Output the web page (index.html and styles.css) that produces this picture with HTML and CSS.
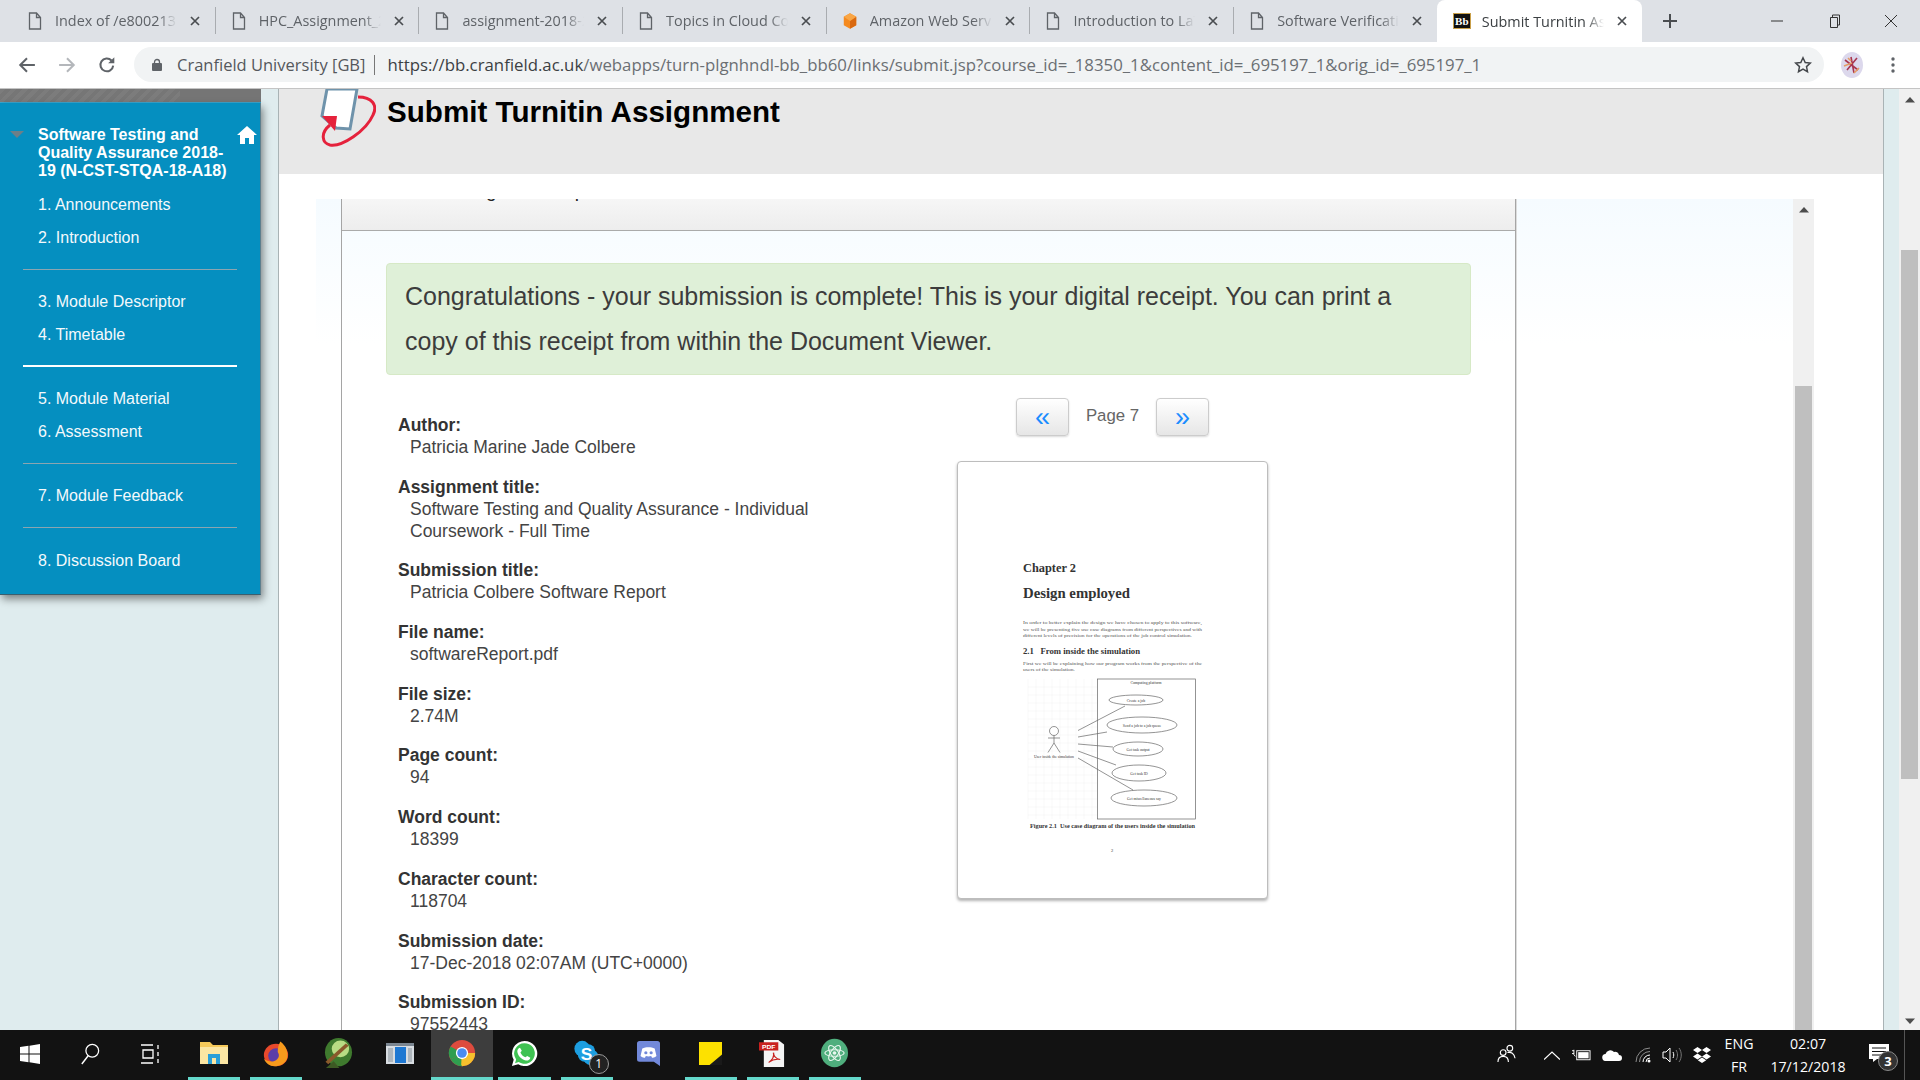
FILE: index.html
```html
<!DOCTYPE html>
<html lang="en">
<head>
    <meta charset="UTF-8">
    <title>Submit Turnitin Assignment</title>
    <link rel="stylesheet" href="styles.css">
</head>
<body>
    <svg class="defs" width="0" height="0">
        <symbol id="doc" viewBox="0 0 14 18"><path d="M1.500 1h7l4 4.500V17h-11zM8.500 1v4.500h4" fill="none" stroke="#5f6368" stroke-width="1.300"/></symbol>
        <symbol id="close" viewBox="0 0 10 10"><path d="M1 1l8 8M9 1l-8 8" fill="none" stroke="#4a4d51" stroke-width="1.700"/></symbol>
        <symbol id="up" viewBox="0 0 10 6"><path d="M5 0l5 5.500H0z" fill="#4d4d4d"/></symbol>
    </svg>

    <div class="tabstrip">
        <div class="tab"><svg class="tab-icon"><use href="#doc"/></svg><span class="tab-title">Index of /e800213</span><svg class="tab-close"><use href="#close"/></svg></div>
        <div class="tab"><svg class="tab-icon"><use href="#doc"/></svg><span class="tab-title">HPC_Assignment_2018</span><svg class="tab-close"><use href="#close"/></svg></div>
        <div class="tab"><svg class="tab-icon"><use href="#doc"/></svg><span class="tab-title">assignment-2018-2019</span><svg class="tab-close"><use href="#close"/></svg></div>
        <div class="tab"><svg class="tab-icon"><use href="#doc"/></svg><span class="tab-title">Topics in Cloud Computing</span><svg class="tab-close"><use href="#close"/></svg></div>
        <div class="tab">
            <svg class="tab-icon" viewBox="0 0 18 20"><path d="M9 0l8 4.500v11L9 20l-8-4.500v-11z" fill="#f58a1f"/><path d="M9 10l8-5.500v11L9 20z" fill="#d9680f"/><path d="M9 0l8 4.500L9 10 1 4.500z" fill="#f9a646"/></svg>
            <span class="tab-title">Amazon Web Services</span><svg class="tab-close"><use href="#close"/></svg>
        </div>
        <div class="tab"><svg class="tab-icon"><use href="#doc"/></svg><span class="tab-title">Introduction to LaTeX</span><svg class="tab-close"><use href="#close"/></svg></div>
        <div class="tab"><svg class="tab-icon"><use href="#doc"/></svg><span class="tab-title">Software Verification</span><svg class="tab-close"><use href="#close"/></svg></div>
        <div class="tab tab-active">
            <span class="bb-icon">Bb</span>
            <span class="tab-title">Submit Turnitin Assignment</span><svg class="tab-close"><use href="#close"/></svg>
        </div>
        <svg class="new-tab" viewBox="0 0 14 14"><path d="M7 0v14M0 7h14" stroke="#4a4d51" stroke-width="2"/></svg>
        <div class="window-controls">
            <svg viewBox="0 0 14 14"><path d="M1 7h12" stroke="#333" stroke-width="1"/></svg>
            <svg viewBox="0 0 14 14"><path d="M3.500 3.500h7v10h-7zM5.500 3.500V1h7v10h-2" fill="none" stroke="#333" stroke-width="1"/></svg>
            <svg viewBox="0 0 14 14"><path d="M1 1l12 12M13 1L1 13" stroke="#333" stroke-width="1"/></svg>
        </div>
    </div>

    <div class="toolbar">
        <svg class="nav-icon first" viewBox="0 0 16 16"><path d="M15 8H2M8 2L2 8l6 6" fill="none" stroke="#5f6368" stroke-width="1.800"/></svg>
        <svg class="nav-icon" viewBox="0 0 16 16"><path d="M1 8h13M8 2l6 6-6 6" fill="none" stroke="#b4b7bb" stroke-width="1.800"/></svg>
        <svg class="nav-icon" viewBox="0 0 16 16"><path d="M13.500 8.500A5.700 5.700 0 1 1 12 4" fill="none" stroke="#5f6368" stroke-width="1.800"/><path d="M14.500 1v5.500H9z" fill="#5f6368"/></svg>
        <div class="omnibox">
            <svg class="lock" viewBox="0 0 10 13"><path d="M2.500 5.500V4a2.500 2.500 0 0 1 5 0v1.500" fill="none" stroke="#5f6368" stroke-width="1.300"/><rect y="5" width="10" height="8" rx="1" fill="#5f6368"/></svg>
            <span class="site-name">Cranfield University [GB]</span>
            <span class="url"><b>https://bb.cranfield.ac.uk</b>/webapps/turn-plgnhndl-bb_bb60/links/submit.jsp?course_id=_18350_1&amp;content_id=_695197_1&amp;orig_id=_695197_1</span>
            <svg class="star" viewBox="0 0 18 18"><path d="M9 1.800l2.200 4.700 5.100.6-3.800 3.500 1 5.100L9 13.200l-4.500 2.500 1-5.100L1.700 7.100l5.100-.6z" fill="none" stroke="#45484c" stroke-width="1.500"/></svg>
        </div>
        <svg class="avatar" viewBox="0 0 26 26"><ellipse cx="13" cy="13" rx="11" ry="13" fill="#dcd8ec"/><path d="M6 8l13 10M8 18l10-12M12 5l3 16" stroke="#a8354f" stroke-width="1.600"/><path d="M5 14l8-3M15 21l5-5M9 6l3 3" stroke="#e39a66" stroke-width="1.600"/></svg>
        <svg class="menu-dots" viewBox="0 0 4 16"><circle cx="2" cy="2" r="1.700" fill="#5f6368"/><circle cx="2" cy="8" r="1.700" fill="#5f6368"/><circle cx="2" cy="14" r="1.700" fill="#5f6368"/></svg>
    </div>

    <div class="viewport">
        <aside class="side">
            <div class="hatch"></div>
            <nav class="course-menu">
                <i class="menu-arrow"></i>
                <svg class="home" viewBox="0 0 20 18"><path d="M10 0l10 9h-3v9h-5v-6H8v6H3V9H0z" fill="#fff"/></svg>
                <h2 class="course-title">Software Testing and Quality Assurance 2018-19 (N-CST-STQA-18-A18)</h2>
                <ul class="menu-group">
                    <li>1. Announcements</li>
                    <li>2. Introduction</li>
                </ul>
                <ul class="menu-group">
                    <li>3. Module Descriptor</li>
                    <li>4. Timetable</li>
                </ul>
                <ul class="menu-group">
                    <li>5. Module Material</li>
                    <li>6. Assessment</li>
                </ul>
                <ul class="menu-group">
                    <li>7. Module Feedback</li>
                </ul>
                <ul class="menu-group">
                    <li>8. Discussion Board</li>
                </ul>
            </nav>
        </aside>

        <main class="main">
            <header class="page-head">
                <svg class="tii-logo" viewBox="0 0 56 60">
                    <path d="M38 8C52 8 58 16 53 26 46 42 22 58 10 56 2 54 0 44 10 36" fill="none" stroke="#e5223c" stroke-width="3"/>
                    <path d="M7 0h30l-7 40-14-1L2 27z" fill="#fff" stroke="#6f93ab" stroke-width="3"/>
                    <path d="M2 27h15l-2 15z" fill="#e5223c"/>
                </svg>
                <h1>Submit Turnitin Assignment</h1>
            </header>

            <div class="frame">
                <div class="frame-content">
                    <section class="panel">
                        <div class="panel-head"><span>Digital Receipt</span></div>
                        <div class="alert">Congratulations - your submission is complete! This is your digital receipt. You can print a copy of this receipt from within the Document Viewer.</div>
                        <div class="receipt">
                            <dl class="meta">
                                <dt>Author:</dt>
                                <dd>Patricia Marine Jade Colbere</dd>
                                <dt>Assignment title:</dt>
                                <dd>Software Testing and Quality Assurance - Individual Coursework - Full Time</dd>
                                <dt>Submission title:</dt>
                                <dd>Patricia Colbere Software Report</dd>
                                <dt>File name:</dt>
                                <dd>softwareReport.pdf</dd>
                                <dt>File size:</dt>
                                <dd>2.74M</dd>
                                <dt>Page count:</dt>
                                <dd>94</dd>
                                <dt>Word count:</dt>
                                <dd>18399</dd>
                                <dt>Character count:</dt>
                                <dd>118704</dd>
                                <dt>Submission date:</dt>
                                <dd>17-Dec-2018 02:07AM (UTC+0000)</dd>
                                <dt>Submission ID:</dt>
                                <dd>97552443</dd>
                            </dl>
                            <div class="viewer">
                                <div class="pager">
                                    <button class="page-btn">&laquo;</button>
                                    <span class="page-no">Page 7</span>
                                    <button class="page-btn">&raquo;</button>
                                </div>
                                <div class="sheet">
                                    <svg class="sheet-page" viewBox="0 0 309 436">
                                        <g class="tex">
                                            <text x="65" y="110" font-size="12" font-weight="bold" textLength="53" lengthAdjust="spacingAndGlyphs">Chapter 2</text>
                                            <text x="65" y="135.500" font-size="15" font-weight="bold" textLength="107" lengthAdjust="spacingAndGlyphs">Design employed</text>
                                            <g font-size="5">
                                                <text x="65" y="162" textLength="179" lengthAdjust="spacingAndGlyphs">In order to better explain the design we have chosen to apply to this software,</text>
                                                <text x="65" y="168.500" textLength="179" lengthAdjust="spacingAndGlyphs">we will be presenting five use case diagrams from different perspectives and with</text>
                                                <text x="65" y="175" textLength="169" lengthAdjust="spacingAndGlyphs">different levels of precision for the operations of the job control simulation.</text>
                                                <text x="65" y="203" textLength="179" lengthAdjust="spacingAndGlyphs">First we will be explaining how our program works from the perspective of the</text>
                                                <text x="65" y="209" textLength="52" lengthAdjust="spacingAndGlyphs">users of the simulation.</text>
                                            </g>
                                            <text x="65" y="191.500" font-size="7.500" font-weight="bold" textLength="117" lengthAdjust="spacingAndGlyphs">2.1 &#160; From inside the simulation</text>
                                            <text x="72" y="366" font-size="5.500" font-weight="bold" textLength="165" lengthAdjust="spacingAndGlyphs">Figure 2.1 &#160;Use case diagram of the users inside the simulation</text>
                                            <text x="153" y="390" font-size="4.500">2</text>
                                        </g>
                                        <g stroke="#f1f1f1" stroke-width="0.500">
                                            <path d="M70 217v140M78 217v140M86 217v140M94 217v140M102 217v140M110 217v140M118 217v140M126 217v140M134 217v140"/>
                                            <path d="M70 225h69M70 233h69M70 241h69M70 249h69M70 257h69M70 265h69M70 273h69M70 281h69M70 289h69M70 297h69M70 305h69M70 313h69M70 321h69M70 329h69M70 337h69M70 345h69M70 353h69"/>
                                        </g>
                                        <g fill="#fff" stroke="#666" stroke-width="0.700">
                                            <rect x="139.500" y="217" width="98" height="140"/>
                                            <ellipse cx="178" cy="238" rx="27" ry="5"/>
                                            <ellipse cx="184" cy="263" rx="35" ry="8"/>
                                            <ellipse cx="180" cy="287" rx="25" ry="7"/>
                                            <ellipse cx="181" cy="311" rx="27" ry="8"/>
                                            <ellipse cx="186" cy="336" rx="33" ry="8"/>
                                            <circle cx="96" cy="269" r="4.500"/>
                                            <path d="M96 273.500V281M90 276h12M96 281l-6 9.500M96 281l6 9.500M120 268.500l47-24.500M120 275l29-5M120 282l35 3M120 289l38 14M120 296l55 32" fill="none"/>
                                        </g>
                                        <g font-size="3.800" fill="#333" text-anchor="middle">
                                            <text x="188" y="222">Computing platform</text>
                                            <text x="178" y="239.500">Create a job</text>
                                            <text x="184" y="264.500">Send a job to a job queue</text>
                                            <text x="180" y="288.500">Get task output</text>
                                            <text x="181" y="312.500">Get task ID</text>
                                            <text x="186" y="337.500">Get miscellaneous say</text>
                                            <text x="96" y="296">User inside the simulation</text>
                                        </g>
                                    </svg>
                                </div>
                            </div>
                        </div>
                    </section>
                </div>
                <div class="scrollbar inner-bar">
                    <svg class="arrow"><use href="#up"/></svg>
                    <div class="thumb inner-thumb"></div>
                </div>
            </div>
        </main>

        <div class="gutter"></div>
        <div class="scrollbar page-bar">
            <svg class="arrow"><use href="#up"/></svg>
            <div class="thumb page-thumb"></div>
            <svg class="arrow arrow-down"><use href="#up"/></svg>
        </div>
    </div>

    <footer class="taskbar">
        <div class="sys-btn">
            <svg viewBox="0 0 20 20"><path d="M0 3l8.500-1.200V9.500H0zM9.500 1.700L20 0v9.500H9.500zM0 10.500h8.500v7.700L0 17zM9.500 10.500H20V20L9.500 18.300z" fill="#fff"/></svg>
        </div>
        <div class="sys-btn">
            <svg viewBox="0 0 22 24"><circle cx="13.500" cy="8.500" r="7" fill="none" stroke="#fff" stroke-width="1.400"/><path d="M9 14L2 23" stroke="#fff" stroke-width="1.600"/></svg>
        </div>
        <div class="sys-btn">
            <svg viewBox="0 0 20 20"><path d="M1 1h12M1 19h12M3 6h10v8H3zM18 1v4M18 8v4M18 15v4" fill="none" stroke="#fff" stroke-width="1.300"/></svg>
        </div>

        <div class="pin running">
            <svg width="28" height="22" viewBox="0 0 28 22"><path d="M0 0h10l3 3h15v19H0z" fill="#f5c95a"/><path d="M0 5h28v17H0z" fill="#fbe6a3"/><path d="M8 12h12v10H8z" fill="#2a9fd8"/><rect x="12" y="16" width="4" height="6" fill="#fbe6a3"/></svg>
        </div>
        <div class="pin running">
            <svg width="26" height="27" viewBox="0 0 30 36" preserveAspectRatio="none"><ellipse cx="15" cy="20" rx="14" ry="15" fill="#e8492c"/><ellipse cx="15" cy="21" rx="9" ry="10" fill="#5b3da8"/><path d="M20 2c7 6 9 14 8 22-2 8-9 11-15 11C8 35 3 31 1 25c4 4 10 5 14 2 4-3 4-8 2-11 0-5 1-10 3-14z" fill="#f79a1c"/></svg>
        </div>
        <div class="pin">
            <svg width="29" height="30" viewBox="0 0 30 36" preserveAspectRatio="none"><ellipse cx="15" cy="17" rx="14" ry="17" fill="#3f7a2e"/><ellipse cx="17" cy="13" rx="9" ry="10" fill="#b9dc84"/><path d="M3 30L24 8" stroke="#8a5a2b" stroke-width="4"/><path d="M2 36l8-8 6 8z" fill="#3d5a24"/></svg>
        </div>
        <div class="pin">
            <svg width="28" height="21" viewBox="0 0 28 21"><rect width="28" height="21" fill="#d8dde2"/><rect width="28" height="3" fill="#7b8691"/><rect x="2" y="5" width="5" height="14" fill="#aeb6bd"/><rect x="9" y="4" width="11" height="16" fill="#1e78d2"/><rect x="22" y="5" width="4" height="14" fill="#aeb6bd"/></svg>
        </div>
        <div class="pin running chrome-pin">
            <svg width="28" height="28" viewBox="0 0 32 32"><circle cx="16" cy="16" r="15" fill="#dd4b3e"/><path d="M16 16L3 23.500A15 15 0 0 0 16 31z" fill="#2f9e4f"/><path d="M16 16L3 23.500A15 15 0 0 1 3 8.500z" fill="#2f9e4f"/><path d="M16 16h15A15 15 0 0 1 16 31l-1-2z" fill="#f6c02d"/><circle cx="16" cy="16" r="7" fill="#fff"/><circle cx="16" cy="16" r="5.500" fill="#4a8bf0"/></svg>
        </div>
        <div class="pin running">
            <svg width="27" height="27" viewBox="0 0 30 30"><path d="M15 1a14 14 0 1 1-7 26l-7 2 2-7A14 14 0 0 1 15 1z" fill="#fff"/><path d="M15 3.500a11.500 11.500 0 1 1-6.500 21l-4 1.200 1.200-4A11.500 11.500 0 0 1 15 3.500z" fill="#3fc252"/><path d="M10 8.500l2 3.500-1.500 1.800c1 2.500 3 4.500 5.500 5.500l2-1.600 3.500 2c-.5 2.500-3 3.500-5 3-5-1-9-5.500-9.500-10 0-2 1-3.700 3-4.200z" fill="#fff"/></svg>
        </div>
        <div class="pin running">
            <svg width="27" height="26" viewBox="0 0 30 30"><circle cx="10" cy="10" r="9" fill="#1d9ee0"/><circle cx="20" cy="20" r="9" fill="#1d9ee0"/><rect x="5" y="5" width="20" height="20" rx="8" fill="#1d9ee0"/><text x="15" y="23" text-anchor="middle" font-size="20" font-weight="bold" fill="#fff" font-family="Liberation Sans">S</text></svg>
            <span class="pin-badge">1</span>
        </div>
        <div class="pin">
            <svg width="23" height="25" viewBox="0 0 26 30" preserveAspectRatio="none"><path d="M3 0h20a3 3 0 0 1 3 3v27l-7-5H3a3 3 0 0 1-3-3V3a3 3 0 0 1 3-3z" fill="#7289da"/><path d="M6 9c4-2 10-2 14 0l2 9c-2 2-4 2-5 2l-1-2c-2 .6-4 .6-6 0l-1 2c-1 0-3 0-5-2z" fill="#fff"/><circle cx="10" cy="14" r="1.800" fill="#7289da"/><circle cx="16" cy="14" r="1.800" fill="#7289da"/></svg>
        </div>
        <div class="pin running">
            <svg width="23" height="23" viewBox="0 0 24 24"><rect width="24" height="24" fill="#fde100"/><path d="M24 13v11H11z" fill="#1a1a1a"/></svg>
        </div>
        <div class="pin running">
            <svg width="27" height="27" viewBox="0 0 28 36" preserveAspectRatio="none"><path d="M5 0h15l6 6v30H5z" fill="#f4f4f4"/><rect y="3" width="20" height="11" fill="#c8201e"/><text x="10" y="11.500" text-anchor="middle" font-size="7" font-weight="bold" fill="#fff" font-family="Liberation Sans">PDF</text><path d="M10 30c4-4 6-9 5-13 0 5 3 8 7 9-5-1-8 0-12 4z" fill="none" stroke="#c8201e" stroke-width="1.400"/></svg>
        </div>
        <div class="pin running">
            <svg width="29" height="30" viewBox="0 0 30 36" preserveAspectRatio="none"><ellipse cx="15" cy="18" rx="14" ry="17" fill="#4fae7d"/><g fill="none" stroke="#e8f6ee" stroke-width="1.200"><ellipse cx="15" cy="18" rx="10" ry="4"/><ellipse cx="15" cy="18" rx="10" ry="4" transform="rotate(60 15 18)"/><ellipse cx="15" cy="18" rx="10" ry="4" transform="rotate(120 15 18)"/></g><circle cx="15" cy="18" r="2" fill="#e8f6ee"/></svg>
        </div>

        <div class="tray">
            <svg class="tray-people" viewBox="0 0 20 20"><g fill="none" stroke="#fff" stroke-width="1.200"><circle cx="13.500" cy="4.500" r="3"/><circle cx="6.500" cy="9" r="3"/><path d="M1 19c0-4 2-6 5.500-6s5.500 2 5.500 6M11 9c4-1 7 1 8 6"/></g></svg>
            <svg class="tray-chevron" viewBox="0 0 16 9"><path d="M0 8.500L8 1l8 7.500" fill="none" stroke="#fff" stroke-width="1.200"/></svg>
            <svg class="tray-battery" viewBox="0 0 20 12"><path d="M0 1.500h2M0 4.500h2M2 .5v5l1.500 2" stroke="#fff" fill="none"/><rect x="5" y="1.500" width="14" height="9.500" fill="none" stroke="#fff"/><rect x="6.500" y="3" width="11" height="6.500" fill="#fff"/></svg>
            <svg class="tray-cloud" viewBox="0 0 20 12"><path d="M4 12a3.500 3.500 0 0 1-.5-7A5 5 0 0 1 12 3a3.800 3.800 0 0 1 5 3 3 3 0 0 1 0 6z" fill="#fff"/></svg>
            <svg class="tray-wifi" viewBox="0 0 16 16"><g fill="none" stroke="#8c8c8c" stroke-width="1"><path d="M1 15A14 14 0 0 1 15 1"/><path d="M4.500 15A10.500 10.500 0 0 1 15 4.500"/></g><path d="M8 15a7 7 0 0 1 7-7" fill="none" stroke="#fff" stroke-width="1"/><path d="M11 15a4 4 0 0 1 4-4" fill="none" stroke="#fff" stroke-width="1"/><circle cx="14" cy="14" r="1.500" fill="#fff"/></svg>
            <svg class="tray-volume" viewBox="0 0 20 16"><path d="M1 5h3l4-4v14l-4-4H1z" fill="none" stroke="#fff"/><path d="M11 5c1 2 1 4 0 6" fill="none" stroke="#fff"/><path d="M14 3c2 3 2 7 0 10M17 1c3 4 3 10 0 14" fill="none" stroke="#777"/></svg>
            <svg class="tray-dropbox" viewBox="0 0 18 16"><path d="M4.500 0L9 3 4.500 6 0 3zM13.500 0L18 3l-4.500 3L9 3zM4.500 6.500L9 9.500l-4.500 3L0 9.500zM13.500 6.500l4.500 3-4.500 3L9 9.500zM4.800 13.300L9 10.500l4.200 2.800L9 16z" fill="#fff"/></svg>
            <div class="lang">ENG<br>FR</div>
            <div class="clock">02:07<br>17/12/2018</div>
            <div class="notify">
                <svg viewBox="0 0 20 18"><path d="M0 0h20v15H8l-4 3v-3H0z" fill="#fff"/><path d="M3 4h14M3 7.500h14M3 11h9" stroke="#111" stroke-width="1"/></svg>
                <span class="notify-badge">3</span>
            </div>
            <div class="show-desktop"></div>
        </div>
    </footer>
</body>
</html>
```

FILE: styles.css
```css
* {
    box-sizing: border-box;
}
html, body {
    height: 100%;
}
body {
    margin: 0;
    width: 1920px;
    height: 1080px;
    overflow: hidden;
    display: flex;
    flex-direction: column;
    font-family: "Liberation Sans", Arial, sans-serif;
    background-color: #fff;
}
.defs {
    position: absolute;
}

/* chrome tabs */
.tabstrip {
    height: 42px;
    flex: none;
    display: flex;
    align-items: stretch;
    padding-left: 12px;
    background-color: #dee1e6;
}
.tab {
    width: 203.7px;
    flex: none;
    display: flex;
    align-items: center;
    padding-left: 16px;
    border-right: 1px solid #a9acb0;
    margin: 7px 0 8px;
    font-family: "Open Sans", sans-serif;
    font-size: 14.4px;
    color: #5f6368;
}
.tab-icon {
    width: 14px;
    height: 18px;
    flex: none;
    margin-right: 13px;
}
.tab-title {
    width: 122px;
    flex: none;
    overflow: hidden;
    white-space: nowrap;
    -webkit-mask-image: linear-gradient(to right, #000 85%, transparent);
    mask-image: linear-gradient(to right, #000 85%, transparent);
}
.tab-close {
    width: 10px;
    height: 10px;
    flex: none;
    margin-left: 13px;
}
.tab-active {
    margin: 0;
    margin-left: -1px;
    border-right: 0;
    border-radius: 8px 8px 0 0;
    background-color: #fff;
    color: #3c4043;
    width: 205px;
}
.bb-icon {
    width: 18px;
    height: 16px;
    flex: none;
    margin: 0 11px 0 0;
    background-color: #111;
    border: 1px solid #c9a04a;
    color: #fff;
    font-family: "Liberation Serif", serif;
    font-size: 11px;
    font-weight: bold;
    line-height: 14px;
    text-align: center;
}
.new-tab {
    width: 14px;
    height: 14px;
    align-self: center;
    margin-left: 21px;
}
.window-controls {
    display: flex;
    align-items: center;
    gap: 43px;
    margin-left: auto;
    padding-right: 22px;
}
.window-controls svg {
    width: 14px;
    height: 14px;
}

/* address bar */
.toolbar {
    height: 47px;
    flex: none;
    display: flex;
    align-items: center;
    padding-top: 5px;
    padding-bottom: 6px;
    border-bottom: 1px solid #c4c4c4;
    background-color: #fff;
}
.nav-icon {
    width: 18px;
    height: 18px;
    flex: none;
    margin-left: 22px;
}
.nav-icon.first {
    margin-left: 18px;
}
.omnibox {
    width: 1690px;
    height: 35px;
    flex: none;
    margin-left: 18px;
    display: flex;
    align-items: center;
    padding-left: 18px;
    border-radius: 18px;
    background-color: #f1f3f4;
    font-family: "Open Sans", sans-serif;
    font-size: 16.8px;
    color: #6b6f73;
    white-space: nowrap;
}
.lock {
    width: 10px;
    height: 13px;
    flex: none;
    margin-right: 15px;
}
.site-name {
    color: #55585c;
    font-size: 16.5px;
    padding-right: 9px;
    margin-right: 12px;
    border-right: 1px solid #777;
    line-height: 20px;
}
.url b {
    font-weight: normal;
    color: #3c4043;
}
.star {
    width: 18px;
    height: 18px;
    margin-left: auto;
    margin-right: 12px;
}
.avatar {
    width: 26px;
    height: 26px;
    flex: none;
    margin-left: 15px;
}
.menu-dots {
    width: 4px;
    height: 16px;
    flex: none;
    margin-left: 26px;
}

/* page */
.viewport {
    height: 941px;
    flex: none;
    display: flex;
    overflow: hidden;
    background-color: #dfecee;
}
.side {
    width: 278px;
    flex: none;
}
.hatch {
    width: 261px;
    height: 14px;
    background:
        linear-gradient(to right, transparent 180px, #757575 180px),
        repeating-linear-gradient(135deg, #7c7c7c 0 4px, #767676 4px 8px);
    border-bottom: 1px solid #3aa6cf;
}
.course-menu {
    position: relative;
    width: 261px;
    height: 492px;
    padding-top: 23px;
    background-color: #058fc0;
    border-right: 1px solid #5e7f8d;
    border-bottom: 1px solid #3b5f6f;
    box-shadow: 2px 4px 8px rgba(0, 0, 0, 0.45);
    color: #f4f9fc;
    font-size: 16px;
}
.menu-arrow {
    position: absolute;
    left: 10px;
    top: 28px;
    border-left: 7px solid transparent;
    border-right: 7px solid transparent;
    border-top: 7px solid #6d7f88;
}
.home {
    position: absolute;
    left: 237px;
    top: 23px;
    width: 20px;
    height: 18px;
}
.course-title {
    width: 200px;
    margin: 0 0 8px 38px;
    font-size: 16px;
    font-weight: bold;
    line-height: 18px;
    color: #fff;
}
.menu-group {
    list-style: none;
    margin: 0 23px;
    padding: 0 0 15px;
    border-bottom: 1px solid #8ca5b0;
}
.menu-group li {
    height: 33px;
    padding-left: 15px;
    line-height: 33px;
}
.menu-group + .menu-group {
    padding-top: 15px;
}
.menu-group:nth-of-type(2) {
    padding-bottom: 14px;
    border-bottom: 2px solid #fff;
}
.menu-group:last-child {
    padding-top: 16px;
    border-bottom: 0;
}
.main {
    width: 1606px;
    flex: none;
    display: flex;
    flex-direction: column;
    border-left: 1px solid #a9b3b5;
    border-right: 1px solid #a9b3b5;
    background-color: #fff;
}
.page-head {
    height: 85px;
    flex: none;
    display: flex;
    align-items: flex-start;
    padding-left: 41px;
    background-color: #e8e8e8;
}
.tii-logo {
    width: 56px;
    height: 60px;
    flex: none;
}
.page-head h1 {
    margin: 5px 0 0 11px;
    font-size: 29.6px;
    line-height: 36px;
    font-weight: bold;
    color: #000;
}
.frame {
    flex: 1;
    min-height: 0;
    width: 1498px;
    margin: 25px 0 0 37px;
    display: flex;
    overflow: hidden;
}
.frame-content {
    flex: 1;
    padding-left: 25px;
    background: linear-gradient(#f5fbff, #fff 145px);
}
.panel {
    width: 1175px;
    height: 100%;
    overflow: hidden;
    border-left: 1px solid #a5a5a5;
    border-right: 1px solid #a5a5a5;
    box-shadow: 1px 0 0 #dcdcdc;
}
.panel-head {
    height: 32px;
    overflow: hidden;
    padding-left: 126px;
    border-bottom: 1px solid #aaa;
    background: linear-gradient(#f6f6f6, #ededed);
    font-size: 19px;
    line-height: 20px;
    color: #222;
}
.panel-head span {
    display: block;
    margin-top: -18px;
}
.alert {
    width: 1085px;
    margin: 32px 0 0 44px;
    padding: 10px 60px 10px 18px;
    border: 1px solid #d6e9c6;
    border-radius: 4px;
    background-color: #dff0d8;
    font-size: 25px;
    line-height: 45px;
    color: #3c3c3c;
}
.receipt {
    display: flex;
    margin-top: 23px;
    padding-left: 56px;
}
.meta {
    width: 559px;
    flex: none;
    margin: 16px 0 0;
    font-size: 17.5px;
    line-height: 22px;
    color: #444;
}
.meta dt {
    font-weight: bold;
    color: #333;
}
.meta dd {
    width: 430px;
    margin: 0 0 17.7px 12px;
}
.viewer {
    width: 311px;
    flex: none;
}
.pager {
    display: flex;
    justify-content: center;
    align-items: flex-start;
    gap: 17px;
    height: 38px;
    margin-bottom: 25px;
}
.page-btn {
    width: 53px;
    height: 38px;
    padding: 0;
    border: 1px solid #ccc;
    border-radius: 4px;
    background: linear-gradient(#fff, #e6e6e6);
    box-shadow: 0 1px 2px rgba(0, 0, 0, 0.15);
    font-family: "Liberation Sans", sans-serif;
    font-size: 27px;
    line-height: 32px;
    color: #1a8cff;
}
.page-no {
    font-size: 16.8px;
    line-height: 35px;
    color: #666;
}
.sheet {
    height: 438px;
    border: 1px solid #bdbdbd;
    border-radius: 4px;
    background-color: #fff;
    box-shadow: 0 2px 3px rgba(0, 0, 0, 0.3);
    overflow: hidden;
}
.sheet-page {
    display: block;
    width: 309px;
    height: 436px;
    font-family: "Liberation Serif", serif;
}
.tex text {
    fill: #333;
}
.tex g text {
    fill: #555;
}
.scrollbar {
    width: 21px;
    flex: none;
    display: flex;
    flex-direction: column;
    align-items: center;
    background-color: #f0f0f0;
}
.arrow {
    width: 10px;
    height: 6px;
    flex: none;
    margin-top: 8px;
}
.thumb {
    width: 17px;
    flex: none;
    background-color: #bfbfbf;
}
.inner-thumb {
    height: 700px;
    margin-top: 173px;
}
.page-thumb {
    height: 529px;
    margin-top: 147px;
}
.arrow-down {
    transform: rotate(180deg);
    margin-top: auto;
    margin-bottom: 6px;
}
.gutter {
    width: 15px;
    flex: none;
}

/* windows taskbar */
.taskbar {
    height: 50px;
    flex: none;
    display: flex;
    background-color: #121212;
    color: #fff;
}
.sys-btn {
    width: 60px;
    flex: none;
    display: flex;
    align-items: center;
    justify-content: center;
    padding-bottom: 2px;
}
.sys-btn svg {
    width: 20px;
    height: 20px;
}
.sys-btn:nth-child(2) svg {
    width: 20px;
    height: 22px;
}
.sys-btn:nth-child(3) {
    margin-right: 3px;
}
.pin {
    position: relative;
    width: 62.1px;
    flex: none;
    display: flex;
    align-items: center;
    justify-content: center;
    padding-bottom: 4px;
}
.pin.running::after {
    content: "";
    position: absolute;
    left: 5px;
    right: 5px;
    bottom: 0;
    height: 3px;
    background-color: #64d8cb;
}
.chrome-pin {
    background-color: #3d3d3d;
}
.pin.chrome-pin::after {
    left: 0;
    right: 0;
}
.pin-badge {
    position: absolute;
    left: 33px;
    top: 24px;
    width: 20px;
    height: 20px;
    border: 1px solid #999;
    border-radius: 50%;
    background-color: #222;
    font-family: "Open Sans", sans-serif;
    font-size: 12px;
    line-height: 18px;
    text-align: center;
}
.tray {
    flex: 1;
    display: flex;
    align-items: center;
    font-family: "Open Sans", sans-serif;
    font-size: 14.2px;
    line-height: 23px;
    text-align: center;
    padding-left: 631px;
}
.tray svg {
    flex: none;
}
.tray-people {
    width: 19px;
    height: 19px;
    margin-bottom: 3px;
}
.tray-chevron {
    width: 16px;
    height: 9px;
    margin-left: 28px;
}
.tray-battery {
    width: 19px;
    height: 12px;
    margin-left: 12px;
}
.tray-cloud {
    width: 20px;
    height: 12px;
    margin-left: 11px;
}
.tray-wifi {
    width: 16px;
    height: 16px;
    margin-left: 13px;
}
.tray-volume {
    width: 20px;
    height: 16px;
    margin-left: 11px;
}
.tray-dropbox {
    width: 18px;
    height: 16px;
    margin-left: 11px;
}
.lang {
    width: 40px;
    margin-left: 8px;
}
.clock {
    width: 84px;
    margin-left: 7px;
}
.notify {
    position: relative;
    width: 20px;
    height: 18px;
    margin-left: 19px;
    margin-bottom: 4px;
}
.notify svg {
    display: block;
    width: 20px;
    height: 18px;
}
.notify-badge {
    position: absolute;
    left: 9px;
    top: 7px;
    width: 20px;
    height: 20px;
    border: 1px solid #888;
    border-radius: 50%;
    background-color: #333;
    font-size: 13px;
    font-weight: bold;
    line-height: 18px;
}
.show-desktop {
    width: 1px;
    height: 100%;
    margin-left: 15px;
    background-color: #555;
}
```
